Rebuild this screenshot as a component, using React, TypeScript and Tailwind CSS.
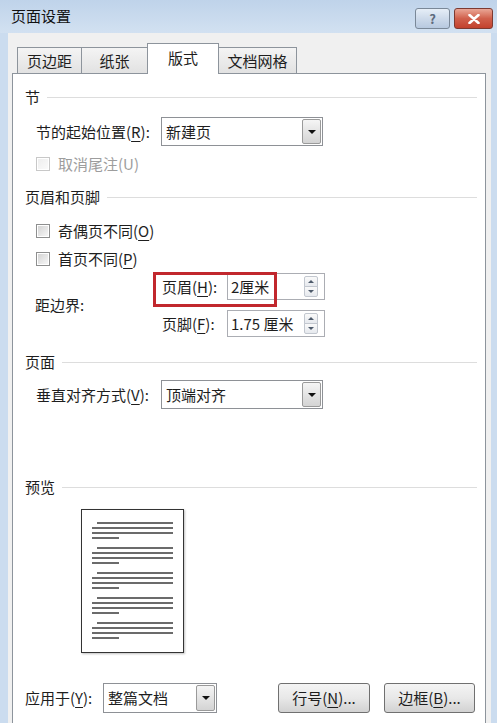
import React from "react";

function Key({ k }: { k: string }) {
  return <span className="underline underline-offset-[3px]">{k}</span>;
}

function SectionHeader({ label, className = "" }: { label: string; className?: string }) {
  return (
    <div className={`flex h-[20px] items-center ${className}`}>
      <span>{label}</span>
      <div className="ml-[7px] h-px flex-1 bg-[#dddddd]" />
    </div>
  );
}

function Combo({ value, className = "" }: { value: string; className?: string }) {
  return (
    <div className={`flex h-[29px] border border-[#8e9196] bg-white ${className}`}>
      <div className="flex flex-1 items-center pl-[4px]">{value}</div>
      <div className="m-px flex w-[19px] items-center justify-center rounded-[2px] border border-[#9a9a9a] bg-gradient-to-b from-[#f5f5f5] to-[#d4d4d4]">
        <div className="h-0 w-0 border-x-[4px] border-t-[4px] border-x-transparent border-t-[#111111]" />
      </div>
    </div>
  );
}

function Spin({ value }: { value: string }) {
  return (
    <div className="flex h-[27px] w-[98px] items-center border border-[#abadb3] bg-white pl-[3px] pr-[6px]">
      <span className="flex-1">{value}</span>
      <div className="flex h-[21px] w-[14px] flex-col">
        <div className="flex flex-1 items-center justify-center rounded-t-[2px] border border-[#c2c7cf] bg-gradient-to-b from-[#fafafa] to-[#e6e9ee]">
          <div className="h-0 w-0 border-x-[3px] border-b-[3px] border-x-transparent border-b-[#4d5a6b]" />
        </div>
        <div className="-mt-px flex flex-1 items-center justify-center rounded-b-[2px] border border-[#c2c7cf] bg-gradient-to-b from-[#fafafa] to-[#e6e9ee]">
          <div className="h-0 w-0 border-x-[3px] border-t-[3px] border-x-transparent border-t-[#4d5a6b]" />
        </div>
      </div>
    </div>
  );
}

function Check({ children, disabled = false, className = "" }: { children: React.ReactNode; disabled?: boolean; className?: string }) {
  return (
    <div className={`flex h-[20px] items-center ${className}`}>
      <div
        className={`flex h-[14px] w-[14px] items-center justify-center border bg-white ${
          disabled ? "border-[#c8c8c8]" : "border-[#8e8f8f]"
        }`}
      >
        <div
          className={`h-[10px] w-[10px] bg-gradient-to-br ${
            disabled ? "from-[#eeeeee] to-[#fafafa]" : "from-[#d4d4d4] to-[#f6f6f6]"
          }`}
        />
      </div>
      <span className={`ml-[8px] ${disabled ? "text-[#9d9d9d]" : ""}`}>{children}</span>
    </div>
  );
}

function PushButton({ children, className = "" }: { children: React.ReactNode; className?: string }) {
  return (
    <div
      className={`flex h-[30px] items-center justify-center rounded-[3px] border border-[#707070] bg-gradient-to-b from-[#f4f4f4] via-[#e8e8e8] to-[#d2d2d2] ${className}`}
    >
      {children}
    </div>
  );
}

function Tab({ label, selected = false, className = "" }: { label: string; selected?: boolean; className?: string }) {
  return selected ? (
    <div
      className={`relative z-10 -mb-px flex h-[31px] items-center justify-center border border-b-0 border-[#8d949c] bg-white pb-[2px] ${className}`}
    >
      {label}
    </div>
  ) : (
    <div
      className={`flex h-[26px] items-center justify-center border border-b-0 border-[#8d949c] bg-gradient-to-b from-[#f4f4f4] to-[#e2e2e2] ${className}`}
    >
      {label}
    </div>
  );
}

function PagePreview() {
  const groups = [13, 38, 63, 88, 113];
  return (
    <div className="ml-[56px] h-[144px] w-[103px] border border-[#333333] bg-white shadow-[1px_1px_2px_rgba(0,0,0,0.25)]">
      <svg width="101" height="142" viewBox="0 0 101 142">
        {groups.map((g) => (
          <g key={g} stroke="#3a3a3a" strokeWidth="1.5">
            <line x1="15" y1={g} x2="91" y2={g} />
            <line x1="10" y1={g + 5} x2="91" y2={g + 5} />
            <line x1="10" y1={g + 10} x2="91" y2={g + 10} />
            <line x1="10" y1={g + 15} x2="37" y2={g + 15} />
          </g>
        ))}
      </svg>
    </div>
  );
}

export default function App() {
  return (
    <div className="flex h-[723px] w-[497px] flex-col overflow-hidden bg-[#cbdcef] font-['Noto_Sans_CJK_SC',sans-serif] text-[15px] leading-[20px] text-[#1e1e1e]">
      {/* title bar */}
      <div className="flex h-[33px] items-start bg-gradient-to-b from-[#bfd3ea] to-[#d2e1f1]">
        <div className="pl-[11px] pt-[6px] text-[#111111]">页面设置</div>
        <div className="ml-auto mr-[4px] mt-[8px] flex gap-[4px]">
          <div className="flex h-[21px] w-[35px] items-center justify-center rounded-[3px] border border-[#7a8898] bg-gradient-to-b from-[#e6eef7] via-[#cddaea] to-[#b7c9df] text-[13px] font-bold leading-none text-[#5d6b7d]">
            ?
          </div>
          <div className="flex h-[21px] w-[39px] items-center justify-center rounded-[3px] border border-[#7d3a31] bg-gradient-to-b from-[#e9a696] via-[#d0604c] to-[#c2412d]">
            <svg width="12" height="10" viewBox="0 0 12 10">
              <path d="M1.5 1 L10.5 9 M10.5 1 L1.5 9" stroke="#ffffff" strokeWidth="2.6" strokeLinecap="round" />
            </svg>
          </div>
        </div>
      </div>

      {/* client area */}
      <div className="ml-[8px] flex w-[483px] flex-1 flex-col bg-[#f0f0f0]">
        <div className="flex h-[40px] items-end pl-[9px]">
          <Tab label="页边距" className="w-[65px]" />
          <Tab label="纸张" className="-ml-px w-[67px]" />
          <Tab label="版式" selected className="-ml-px w-[72px]" />
          <Tab label="文档网格" className="-ml-px w-[79px]" />
        </div>

        <div className="ml-[4px] flex w-[474px] flex-1 flex-col border border-b-0 border-[#8d949c] bg-white pl-[12px] pr-[8px]">
          <SectionHeader label="节" className="mt-[13px]" />
          <div className="mt-[10px] flex items-center pl-[11px]">
            <span className="w-[125px]">
              节的起始位置(<Key k="R" />):
            </span>
            <Combo value="新建页" className="w-[162px]" />
          </div>
          <Check disabled className="mt-[8px] pl-[11px]">
            取消尾注(U)
          </Check>

          <SectionHeader label="页眉和页脚" className="mt-[13px]" />
          <Check className="mt-[14px] pl-[11px]">
            奇偶页不同(<Key k="O" />)
          </Check>
          <Check className="mt-[8px] pl-[11px]">
            首页不同(<Key k="P" />)
          </Check>

          <div className="mt-[4px] flex items-center pl-[10px]">
            <span className="w-[127px]">距边界:</span>
            <div className="flex flex-col gap-[10px]">
              <div className="relative flex items-center">
                <span className="w-[65px]">
                  页眉(<Key k="H" />):
                </span>
                <Spin value="2厘米" />
                <div className="absolute -left-[9px] -top-[1px] h-[35px] w-[124px] border-[3px] border-[#c1272d]" />
              </div>
              <div className="flex items-center">
                <span className="w-[65px]">
                  页脚(<Key k="F" />):
                </span>
                <Spin value="1.75 厘米" />
              </div>
            </div>
          </div>

          <SectionHeader label="页面" className="mt-[15px]" />
          <div className="mt-[8px] flex items-center pl-[11px]">
            <span className="w-[125px]">
              垂直对齐方式(<Key k="V" />):
            </span>
            <Combo value="顶端对齐" className="w-[162px]" />
          </div>

          <SectionHeader label="预览" className="mt-[68px]" />
          <div className="mt-[12px]">
            <PagePreview />
          </div>

          <div className="mt-[30px] flex items-center">
            <span className="w-[78px]">
              应用于(<Key k="Y" />):
            </span>
            <Combo value="整篇文档" className="w-[114px] h-[30px]" />
            <PushButton className="ml-[61px] w-[92px]">
              行号(<Key k="N" />)...
            </PushButton>
            <PushButton className="ml-[14px] w-[91px]">
              边框(<Key k="B" />)...
            </PushButton>
          </div>
        </div>
      </div>
    </div>
  );
}
